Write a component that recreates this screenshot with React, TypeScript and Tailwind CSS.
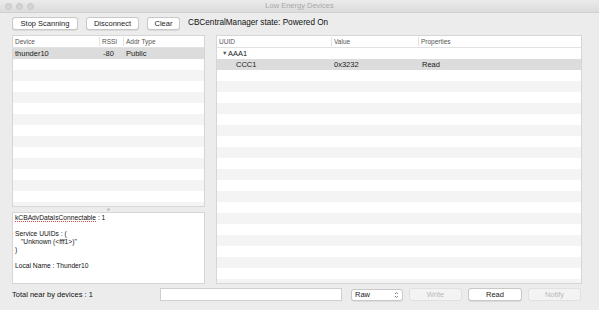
import React from "react";

const font = { fontFamily: '"Liberation Sans", Arial, sans-serif' };

const Stripes = ({ count, start }: { count: number; start: number }) => (
  <>
    {Array.from({ length: count }).map((_, i) => (
      <div
        key={i}
        className={`h-[11px] shrink-0 ${(i + start) % 2 === 0 ? "bg-white" : "bg-[#f4f4f4]"}`}
      />
    ))}
  </>
);

const Btn = ({ label, w, disabled }: { label: string; w: string; disabled?: boolean }) => (
  <div
    className={`${w} h-[13px] flex items-center justify-center rounded-[3px] border text-[7.5px] ${
      disabled
        ? "border-[#e0e0e0] bg-[#f3f3f3] text-[#b9b9b9]"
        : "border-[#c8c8c8] bg-white text-[#1a1a1a] shadow-[0_0.5px_0.5px_rgba(0,0,0,0.15)]"
    }`}
  >
    {label}
  </div>
);

export default function App() {
  return (
    <div style={font} className="w-[599px] h-[310px] bg-[#ececec] flex flex-col overflow-hidden text-[#1a1a1a]">
      {/* title bar */}
      <div className="h-[13px] shrink-0 relative flex items-center justify-center bg-gradient-to-b from-[#ebebeb] to-[#dcdcdc] border-b border-[#d0d0d0]">
        <div className="absolute left-[5px] top-[3px] flex gap-[4px]">
          <span className="w-[7px] h-[7px] rounded-full bg-[#d4d4d4] border border-[#c6c6c6]" />
          <span className="w-[7px] h-[7px] rounded-full bg-[#d4d4d4] border border-[#c6c6c6]" />
          <span className="w-[7px] h-[7px] rounded-full bg-[#d4d4d4] border border-[#c6c6c6]" />
        </div>
        <span className="text-[7.5px] text-[#a8a8a8]">Low Energy Devices</span>
      </div>

      {/* toolbar */}
      <div className="flex items-center gap-[8px] pl-[12px] pt-[4px] h-[17px] shrink-0">
        <Btn label="Stop Scanning" w="w-[66px]" />
        <Btn label="Disconnect" w="w-[53px]" />
        <Btn label="Clear" w="w-[33px]" />
        <span className="text-[8.2px] text-[#111]">CBCentralManager state: Powered On</span>
      </div>

      {/* main */}
      <div className="flex mt-[5px] pl-[12px] gap-[11px] h-[249px] shrink-0">
        {/* left column */}
        <div className="w-[193px] flex flex-col">
          <div className="h-[172px] flex flex-col bg-white border border-[#d6d6d6] overflow-hidden">
            <div className="h-[12px] shrink-0 flex items-center text-[6.5px] text-[#555] border-b border-[#e2e2e2]">
              <span className="w-[87px] pl-[2px] border-r border-[#e2e2e2]">Device</span>
              <span className="w-[24px] pl-[2px] border-r border-[#e2e2e2]">RSSI</span>
              <span className="pl-[2px]">Addr Type</span>
            </div>
            <div className="h-[11px] shrink-0 flex items-center bg-[#dcdcdc] text-[7.5px]">
              <span className="w-[88px] pl-[2px]">thunder10</span>
              <span className="w-[24px] pl-[2px]">-80</span>
              <span className="pl-[1px]">Public</span>
            </div>
            <Stripes count={15} start={0} />
          </div>
          <div className="h-[5px] shrink-0 flex items-center justify-center">
            <span className="w-[3px] h-[3px] rounded-full bg-[#c4c4c4]" />
          </div>
          <div className="flex-1 bg-white border border-[#d6d6d6] px-[2px] pt-[1px] text-[6.7px] leading-[8px] text-[#111]">
            <div>
              <span className="underline decoration-dotted decoration-[#e0504a]">kCBAdvDataIsConnectable</span> : 1
            </div>
            <div className="h-[8px]" />
            <div>Service UUIDs : (</div>
            <div className="pl-[6px]">"Unknown (&lt;fff1&gt;)"</div>
            <div>)</div>
            <div className="h-[8px]" />
            <div>Local Name : Thunder10</div>
          </div>
        </div>

        {/* right table */}
        <div className="w-[366px] flex flex-col bg-white border border-[#d6d6d6] overflow-hidden">
          <div className="h-[12px] shrink-0 flex items-center text-[6.5px] text-[#555] border-b border-[#e2e2e2]">
            <span className="w-[115px] pl-[2px] border-r border-[#e2e2e2]">UUID</span>
            <span className="w-[87px] pl-[2px] border-r border-[#e2e2e2]">Value</span>
            <span className="pl-[2px]">Properties</span>
          </div>
          <div className="h-[11px] shrink-0 flex items-center bg-white text-[7.5px]">
            <span className="pl-[5px] flex items-center">
              <span className="text-[5.5px] text-[#555] mr-[0.5px]">▼</span>AAA1
            </span>
          </div>
          <div className="h-[11px] shrink-0 flex items-center bg-[#dcdcdc] text-[7.5px]">
            <span className="w-[116px] pl-[19px]">CCC1</span>
            <span className="w-[87px] pl-[1px]">0x3232</span>
            <span className="pl-[2px]">Read</span>
          </div>
          <Stripes count={22} start={0} />
        </div>
      </div>

      {/* bottom bar */}
      <div className="flex items-center h-[21px] pl-[12px] text-[7.5px]">
        <span className="w-[148px] text-[#111]">Total near by devices : 1</span>
        <div className="w-[182px] h-[13px] bg-white border border-[#cfcfcf]" />
        <div className="ml-[9px] w-[52px] h-[12px] bg-white border border-[#c8c8c8] rounded-[3px] flex items-center justify-between px-[3px] shadow-[0_0.5px_0.5px_rgba(0,0,0,0.12)]">
          <span>Raw</span>
          <svg width="5" height="8" viewBox="0 0 5 8" fill="none" stroke="#666" strokeWidth="0.8">
            <path d="M1 3 L2.5 1.5 L4 3" />
            <path d="M1 5 L2.5 6.5 L4 5" />
          </svg>
        </div>
        <div className="ml-[6px] flex gap-[6px]">
          <Btn label="Write" w="w-[53px]" disabled />
          <Btn label="Read" w="w-[54px]" />
          <Btn label="Notify" w="w-[53px]" disabled />
        </div>
      </div>
    </div>
  );
}
